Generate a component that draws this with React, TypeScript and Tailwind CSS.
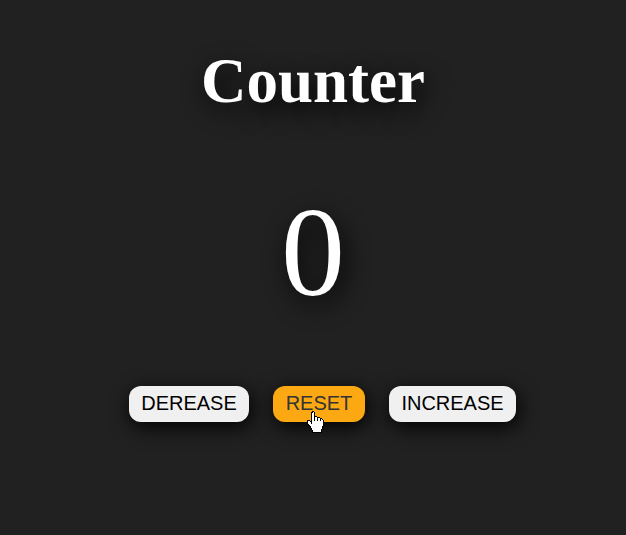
import { useState } from "react";

const buttonClass =
  "h-9 cursor-pointer rounded-xl pb-0.5 text-center text-xl leading-6 shadow-[2px_5px_20px_#000000]";

function HandPointer() {
  return (
    <svg
      aria-hidden="true"
      className="pointer-events-none absolute top-[25px] left-[34px] h-[22px] w-[17px]"
      viewBox="0 0 17 22"
      shapeRendering="crispEdges"
    >
      <path
        d="M5.5 .5h1l1 1v4h2l1 1h2l1 1h1l2 2v5l-1 1v2l-1 1v3H5.5v-2l-1-1v-1l-2-3-2-2v-3h2l2 2v-9z"
        fill="#fff"
        stroke="#000"
      />
      <path d="M7.5 5v5M10.5 6v4M13.5 7v3M4.5 10v3" fill="none" stroke="#000" />
    </svg>
  );
}

export default function App() {
  const [count, setCount] = useState(0);

  return (
    <main className="flex min-h-screen flex-col items-center bg-[#212121] pt-11 text-white">
      <h1 className="font-['Liberation_Serif',serif] text-[63px] leading-[74px] font-bold [text-shadow:4px_8px_24px_#000000]">
        Counter
      </h1>
      <output className="mt-15 font-['Liberation_Serif',serif] text-[128px] leading-[148px] [text-shadow:4px_8px_24px_#000000]">
        {count}
      </output>
      <div className="mt-15 ml-[19px] flex gap-6 font-['Liberation_Sans',sans-serif] text-black">
        <button
          type="button"
          className={`${buttonClass} w-[120px] bg-[#f0f0f0]`}
          onClick={() => setCount(count - 1)}
        >
          DEREASE
        </button>
        <div className="relative">
          <button
            type="button"
            className={`${buttonClass} w-[92px] bg-[#fba812] text-[#333]`}
            onClick={() => setCount(0)}
          >
            RESET
          </button>
          <HandPointer />
        </div>
        <button
          type="button"
          className={`${buttonClass} w-[127px] bg-[#f0f0f0]`}
          onClick={() => setCount(count + 1)}
        >
          INCREASE
        </button>
      </div>
    </main>
  );
}
